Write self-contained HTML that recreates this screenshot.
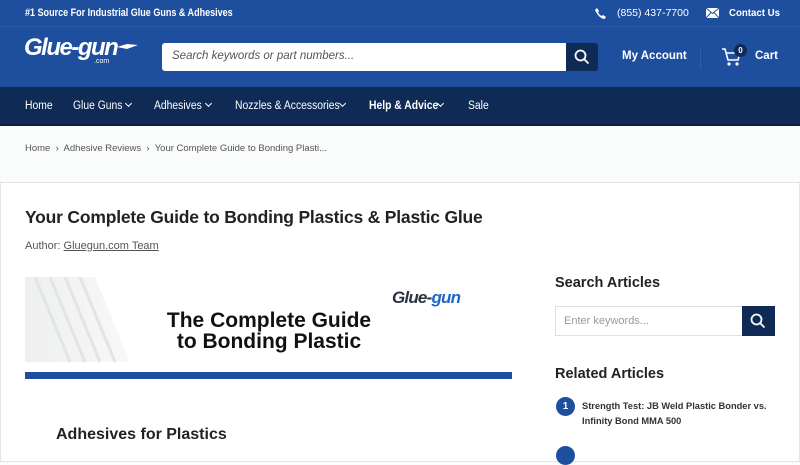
<!DOCTYPE html>
<html><head><meta charset="utf-8"><style>
*{margin:0;padding:0;box-sizing:border-box}
body{width:800px;height:450px;overflow:hidden;font-family:"Liberation Sans",sans-serif;background:#fafbfb;position:relative}
.top{position:absolute;left:0;top:0;width:800px;height:87px;background:#1e4e9e}
.top .line{position:absolute;left:0;top:26px;width:800px;height:1px;background:#2b5aa8}
.w{color:#fff;position:absolute;font-size:10.5px;font-weight:bold;white-space:nowrap}
.nav{position:absolute;left:0;top:87px;width:800px;height:39px;background:#0f2a55;border-bottom:2px solid #0a1d3d}
.nav span{position:absolute;top:13px;color:#fff;font-size:11.5px;white-space:nowrap;transform:scaleX(0.9);transform-origin:left}
.chev{position:absolute;top:101px;width:5px;height:5px;border-right:1.5px solid #fff;border-bottom:1.5px solid #fff;transform:rotate(45deg)}
.card{position:absolute;left:0;top:182px;width:800px;height:280px;background:#fff;border:1px solid #e3e6e8}
</style></head><body>
<div class="top"><div class="line"></div></div>
<div class="w" style="left:25px;top:7px;font-size:11px;transform:scaleX(0.82);transform-origin:left">#1 Source For Industrial Glue Guns &amp; Adhesives</div>
<svg style="position:absolute;left:594px;top:7px" width="13" height="13" viewBox="0 0 13 13"><path d="M3 1 L5 4 L4 5.5 Q5.5 8 7.5 9 L9 8 L12 10 L10.5 12 Q5 11.5 1 3 Z" fill="#fff"/></svg>
<div class="w" style="left:617px;top:7px;font-weight:normal">(855) 437-7700</div>
<svg style="position:absolute;left:706px;top:8px" width="13" height="10" viewBox="0 0 13 10"><rect x="0" y="0" width="13" height="10" fill="#fff"/><path d="M0 0 L6.5 5.5 L13 0 M0 10 L5 4.5 M13 10 L8 4.5" stroke="#1e4e9e" stroke-width="1" fill="none"/></svg>
<div class="w" style="left:729px;top:7px;transform:scaleX(0.92);transform-origin:left">Contact Us</div>
<div style="position:absolute;left:24px;top:34px;color:#fff;font-size:24px;font-weight:bold;font-style:italic;letter-spacing:-1.5px">Glue-gun</div>
<svg style="position:absolute;left:117px;top:42px" width="22" height="10"><path d="M0 5 L10 2 L21 3 L10 7 Z" fill="#fff"/></svg>
<div style="position:absolute;left:94px;top:58px;color:#fff;font-size:7px">.com</div>
<div style="position:absolute;left:162px;top:43px;width:405px;height:28px;background:#fff;border-radius:3px 0 0 3px"></div>
<div style="position:absolute;left:172px;top:50px;font-size:11.5px;font-style:italic;color:#555">Search keywords or part numbers...</div>
<div style="position:absolute;left:566px;top:43px;width:32px;height:28px;background:#0f2a55;border-radius:0 3px 3px 0"></div>
<svg style="position:absolute;left:574px;top:49px" width="16" height="16" viewBox="0 0 16 16"><circle cx="6.5" cy="6.5" r="5" stroke="#fff" stroke-width="1.8" fill="none"/><path d="M10 10 L14.5 14.5" stroke="#fff" stroke-width="1.8"/></svg>
<div class="w" style="left:622px;top:50px;font-size:11.5px">My Account</div>
<div style="position:absolute;left:700px;top:47px;width:1px;height:22px;background:#2d5eae"></div>
<svg style="position:absolute;left:721px;top:47px" width="22" height="20" viewBox="0 0 22 20"><path d="M1 2 L4 2 L7 13 L17 13 L19 6 L6 6" stroke="#fff" stroke-width="1.6" fill="none"/><circle cx="8" cy="17" r="1.6" fill="#fff"/><circle cx="16" cy="17" r="1.6" fill="#fff"/></svg>
<div style="position:absolute;left:734px;top:44px;width:13px;height:13px;border-radius:50%;background:#0f2a55;color:#fff;font-size:8px;font-weight:bold;text-align:center;line-height:13px">0</div>
<div class="w" style="left:755px;top:50px;font-size:11.5px">Cart</div>
<div class="nav">
<span style="left:25px">Home</span>
<span style="left:73px">Glue Guns</span>
<span style="left:154px">Adhesives</span>
<span style="left:235px">Nozzles &amp; Accessories</span>
<span style="left:369px;font-weight:bold">Help &amp; Advice</span>
<span style="left:468px">Sale</span>
</div>
<i class="chev" style="left:126px"></i>
<i class="chev" style="left:206px"></i>
<i class="chev" style="left:340px"></i>
<i class="chev" style="left:438px"></i>
<div style="position:absolute;left:25px;top:143px;font-size:9.5px;color:#555">Home &nbsp;›&nbsp; Adhesive Reviews &nbsp;›&nbsp; Your Complete Guide to Bonding Plasti...</div>
<div class="card"></div>
<div style="position:absolute;left:25px;top:207px;font-size:17.5px;font-weight:bold;color:#222;letter-spacing:-0.2px">Your Complete Guide to Bonding Plastics &amp; Plastic Glue</div>
<div style="position:absolute;left:25px;top:240px;font-size:11px;color:#555">Author: <u>Gluegun.com Team</u></div>
<svg style="position:absolute;left:25px;top:277px" width="110" height="90"><defs><linearGradient id="g" x1="0" x2="1"><stop offset="0" stop-color="#eef0ef"/><stop offset="1" stop-color="#f7f8f7"/></linearGradient></defs><path d="M0 0 L70 0 L105 85 L0 85 Z" fill="url(#g)"/><path d="M10 0 L45 85 M25 0 L60 85 M40 0 L75 85 M55 0 L90 85" stroke="#e2e5e3" stroke-width="3"/></svg>
<div style="position:absolute;left:392px;top:288px;font-size:17px;font-weight:bold;font-style:italic;color:#2a3340;letter-spacing:-0.8px">Glue-<span style="color:#1f66c8">gun</span></div>
<div style="position:absolute;left:150px;top:310px;width:238px;text-align:center;font-size:21px;font-weight:bold;color:#111;line-height:21px">The Complete Guide<br>to Bonding Plastic</div>
<div style="position:absolute;left:25px;top:372px;width:487px;height:7px;background:#1e4e9e"></div>
<div style="position:absolute;left:56px;top:426px;font-size:16px;font-weight:bold;color:#222">Adhesives for Plastics</div>
<div style="position:absolute;left:555px;top:275px;font-size:14.5px;font-weight:bold;color:#222">Search Articles</div>
<div style="position:absolute;left:555px;top:306px;width:188px;height:30px;border:1px solid #dde0e2;background:#fff"></div>
<div style="position:absolute;left:564px;top:315px;font-size:11px;color:#999">Enter keywords...</div>
<div style="position:absolute;left:742px;top:306px;width:33px;height:30px;background:#0f2a55"></div>
<svg style="position:absolute;left:750px;top:313px" width="16" height="16" viewBox="0 0 16 16"><circle cx="6.5" cy="6.5" r="5" stroke="#fff" stroke-width="1.8" fill="none"/><path d="M10 10 L14.5 14.5" stroke="#fff" stroke-width="1.8"/></svg>
<div style="position:absolute;left:555px;top:366px;font-size:14.5px;font-weight:bold;color:#222">Related Articles</div>
<div style="position:absolute;left:556px;top:397px;width:19px;height:19px;border-radius:50%;background:#1e4e9e;color:#fff;font-size:10px;font-weight:bold;text-align:center;line-height:19px">1</div>
<div style="position:absolute;left:582px;top:399px;font-size:9.3px;font-weight:bold;color:#333;line-height:15px">Strength Test: JB Weld Plastic Bonder vs.<br>Infinity Bond MMA 500</div>
<div style="position:absolute;left:556px;top:446px;width:19px;height:19px;border-radius:50%;background:#1e4e9e"></div>
</body></html>
